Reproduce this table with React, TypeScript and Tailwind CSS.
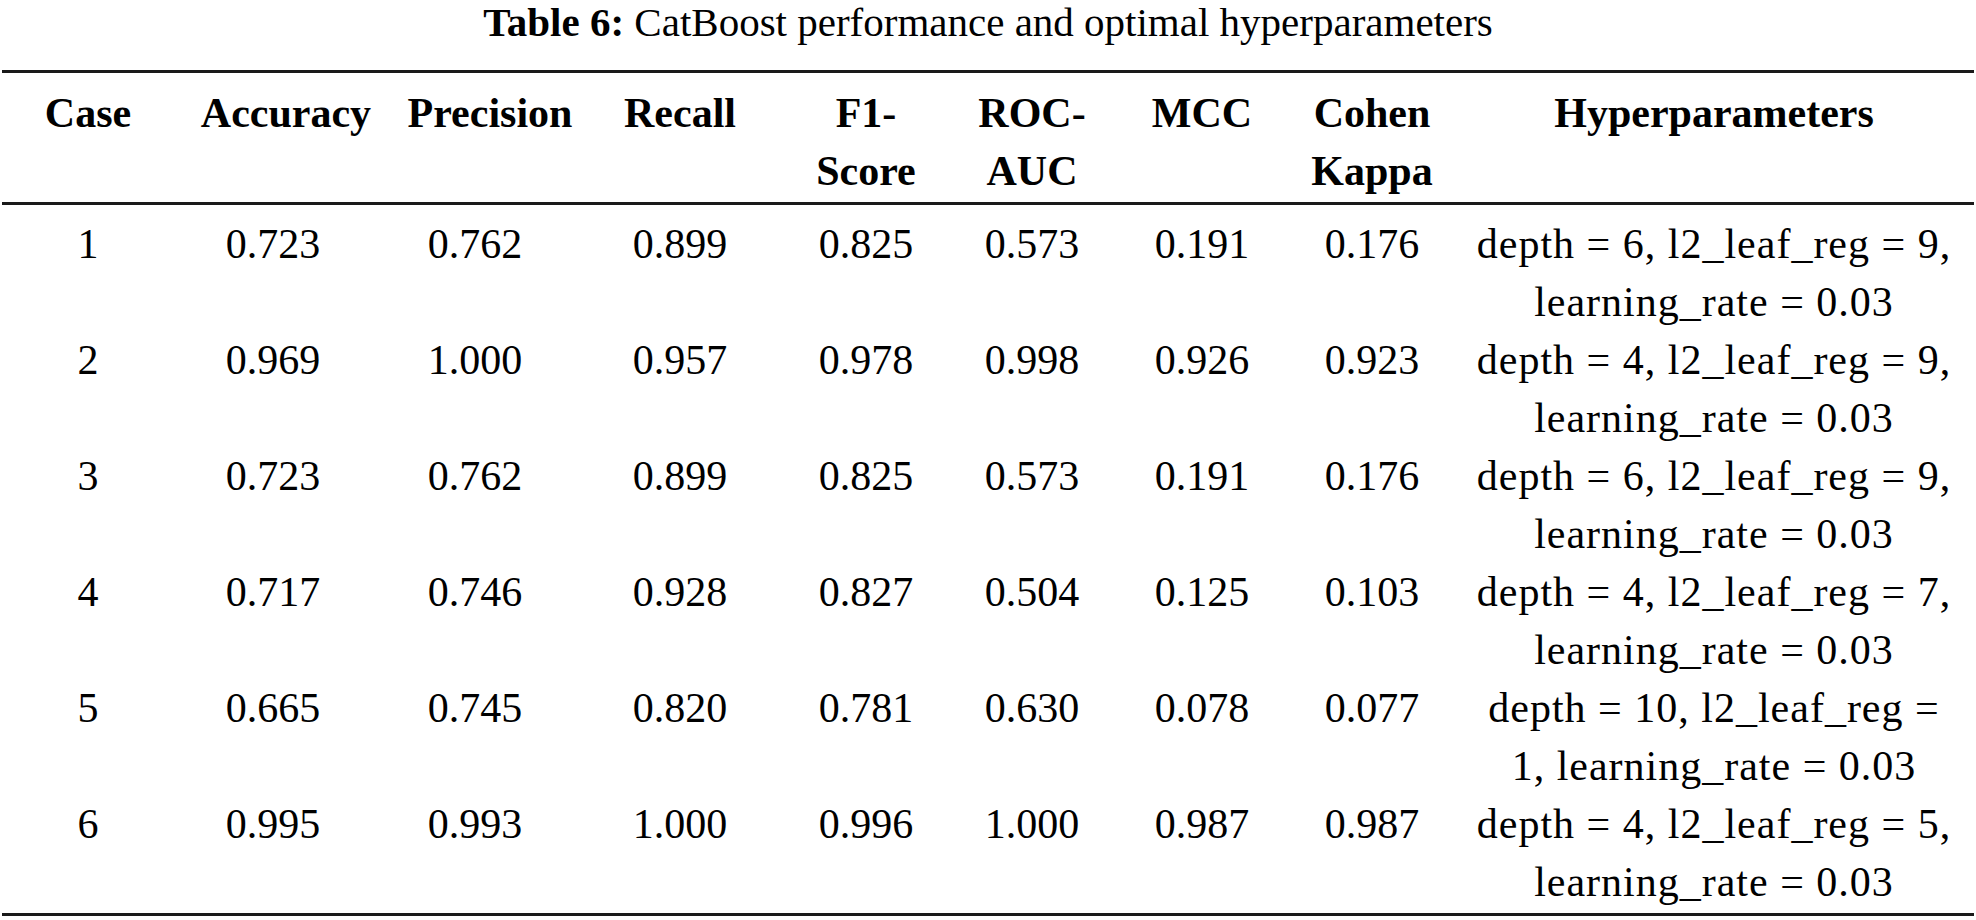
const cols = 'grid grid-cols-[172px_198px_206px_204px_168px_164px_176px_164px_520px]';

type Row = { id: string; vals: string[]; hyper: [string, string] };

const rows: Row[] = [
  { id: '1', vals: ['0.723', '0.762', '0.899', '0.825', '0.573', '0.191', '0.176'], hyper: ['depth = 6, l2_leaf_reg = 9,', 'learning_rate = 0.03'] },
  { id: '2', vals: ['0.969', '1.000', '0.957', '0.978', '0.998', '0.926', '0.923'], hyper: ['depth = 4, l2_leaf_reg = 9,', 'learning_rate = 0.03'] },
  { id: '3', vals: ['0.723', '0.762', '0.899', '0.825', '0.573', '0.191', '0.176'], hyper: ['depth = 6, l2_leaf_reg = 9,', 'learning_rate = 0.03'] },
  { id: '4', vals: ['0.717', '0.746', '0.928', '0.827', '0.504', '0.125', '0.103'], hyper: ['depth = 4, l2_leaf_reg = 7,', 'learning_rate = 0.03'] },
  { id: '5', vals: ['0.665', '0.745', '0.820', '0.781', '0.630', '0.078', '0.077'], hyper: ['depth = 10, l2_leaf_reg =', '1, learning_rate = 0.03'] },
  { id: '6', vals: ['0.995', '0.993', '1.000', '0.996', '1.000', '0.987', '0.987'], hyper: ['depth = 4, l2_leaf_reg = 5,', 'learning_rate = 0.03'] },
];

function Head({ lines, className = '' }: { lines: string[]; className?: string }) {
  return (
    <div className={`flex flex-col items-center whitespace-nowrap font-bold ${className}`}>
      {lines.map(l => <span key={l}>{l}</span>)}
    </div>
  );
}

export default function App() {
  return (
    <div className="w-[1976px] bg-white text-black text-[42px] leading-[58px] font-['Liberation_Serif',serif]">
      <div className="text-center text-[41px] leading-[45px] whitespace-nowrap">
        <span className="font-bold">Table 6:</span> CatBoost performance and optimal hyperparameters
      </div>

      <div className="mx-[2px] mt-[25px]">
        <div className="h-[3px] bg-[#1a1a1a]" />

        <div className={`${cols} pt-[11px] pb-[2px]`}>
          <Head lines={['Case']} />
          <Head lines={['Accuracy']} className="pl-[26px]" />
          <Head lines={['Precision']} className="pl-[30px]" />
          <Head lines={['Recall']} />
          <Head lines={['F1-', 'Score']} />
          <Head lines={['ROC-', 'AUC']} />
          <Head lines={['MCC']} />
          <Head lines={['Cohen', 'Kappa']} />
          <Head lines={['Hyperparameters']} />
        </div>

        <div className="h-[3px] bg-[#1a1a1a]" />

        <div className="pt-[10px] pb-[2px]">
          {rows.map(r => (
            <div key={r.id} className={`${cols} h-[116px]`}>
              <div className="text-center">{r.id}</div>
              {r.vals.map((v, i) => (
                <div key={i} className="text-center">{v}</div>
              ))}
              <div className="flex flex-col items-center whitespace-nowrap tracking-[1px]">
                <span>{r.hyper[0]}</span>
                <span>{r.hyper[1]}</span>
              </div>
            </div>
          ))}
        </div>

        <div className="h-[3px] bg-[#1a1a1a]" />
      </div>
    </div>
  );
}
